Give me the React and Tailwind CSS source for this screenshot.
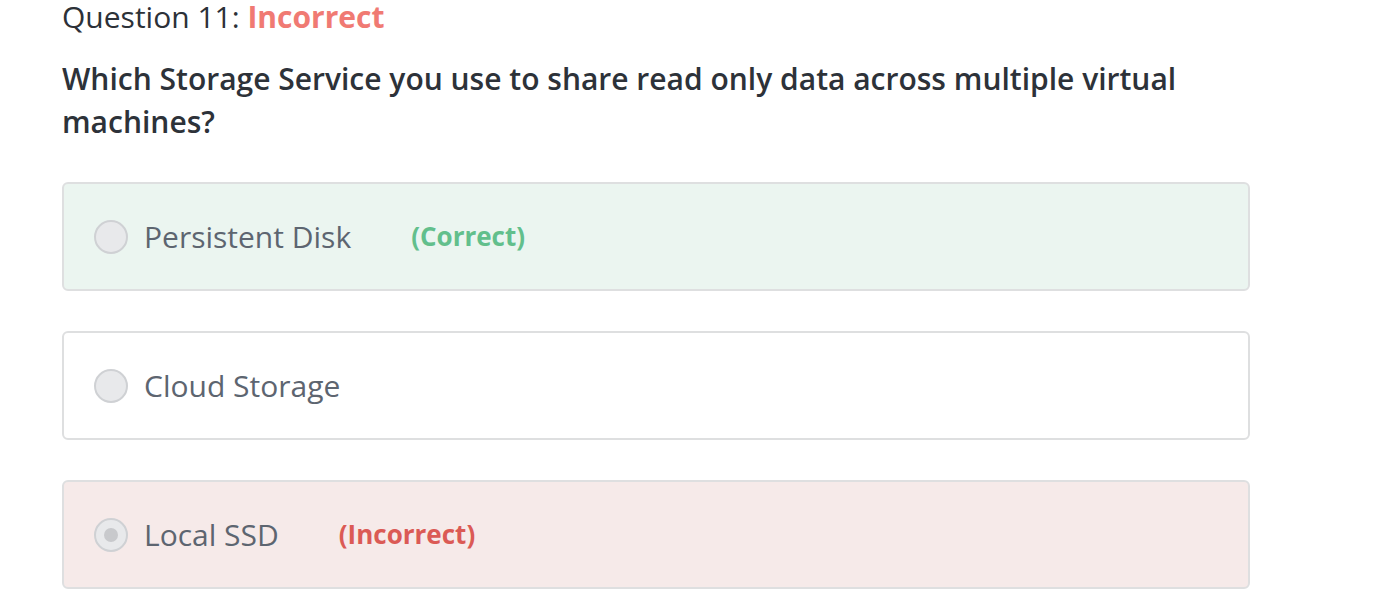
import React from "react";

function Radio({ checked }) {
  return (
    <span className="flex h-[34px] w-[34px] shrink-0 items-center justify-center rounded-full border-2 border-[#cfd1d4] bg-[#e8e9eb]">
      {checked && <span className="h-[14px] w-[14px] rounded-full bg-[#c8c9cc]" />}
    </span>
  );
}

function Option({ label, tag, tagColor, bg, checked }) {
  return (
    <div className={`flex h-[109px] w-[1188px] items-center rounded-[6px] border-2 border-[#dedfe0] pl-[30px] ${bg}`}>
      <Radio checked={checked} />
      <span className="ml-[16px] text-[30px] text-[#5d6570]">{label}</span>
      {tag && <span className={`ml-[60px] text-[26px] font-bold ${tagColor}`}>{tag}</span>}
    </div>
  );
}

export default function App() {
  return (
    <div className="min-h-[614px] bg-white pl-[62px] pt-0" style={{ fontFamily: '"Open Sans", sans-serif' }}>
      <div className="text-[30px] leading-[33px] text-[#2c3138]">
        Question 11: <span className="font-bold text-[#f07a73]">Incorrect</span>
      </div>
      <div className="mt-[24px] w-[1150px] text-[30px] font-semibold leading-[43px] text-[#2d3239]">
        Which Storage Service you use to share read only data across multiple virtual machines?
      </div>
      <div className="mt-[39px] flex flex-col gap-[40px]">
        <Option label="Persistent Disk" tag="(Correct)" tagColor="text-[#62bf8c]" bg="bg-[#ebf5f0]" />
        <Option label="Cloud Storage" bg="bg-white" />
        <Option label="Local SSD" tag="(Incorrect)" tagColor="text-[#db5a55]" bg="bg-[#f6eae9]" checked />
      </div>
    </div>
  );
}
